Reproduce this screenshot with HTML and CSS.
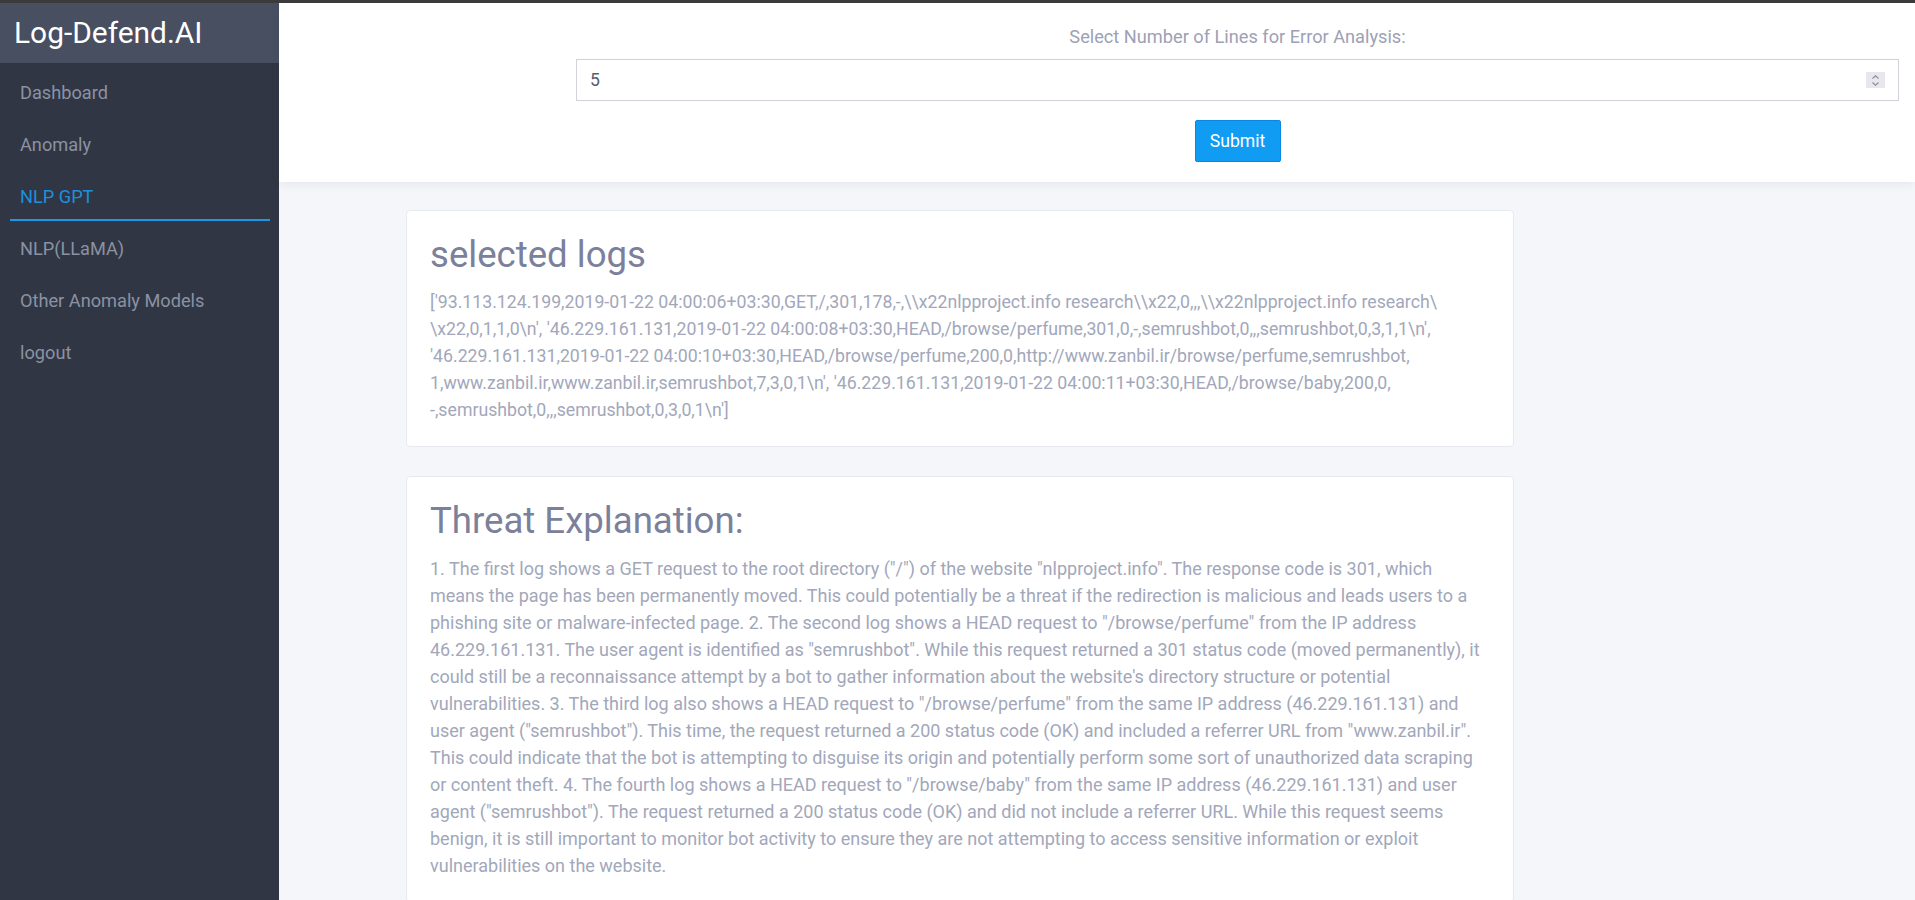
FILE: index.html
```html
<!DOCTYPE html>
<html lang="en">
<head>
<meta charset="utf-8">
<title>Log-Defend.AI</title>
<link rel="stylesheet" href="styles.css">
</head>
<body>
<div class="app">
  <aside class="sidebar">
    <div class="brand">Log-Defend.AI</div>
    <nav class="nav">
      <a class="nav-item" href="#">Dashboard</a>
      <a class="nav-item" href="#">Anomaly</a>
      <a class="nav-item active" href="#">NLP GPT</a>
      <a class="nav-item" href="#">NLP(LLaMA)</a>
      <a class="nav-item" href="#">Other Anomaly Models</a>
      <a class="nav-item" href="#">logout</a>
    </nav>
  </aside>
  <main class="main">
    <header class="topbar">
      <form class="line-form">
        <label class="form-label" for="lines">Select Number of Lines for Error Analysis:</label>
        <div class="num-field">
          <input id="lines" class="num-input" type="text" value="5">
          <span class="spinner">
            <svg width="9" height="13" viewBox="0 0 9 13"><path d="M1.5 4.5 L4.5 1.8 L7.5 4.5" fill="none" stroke="#8a8f9c" stroke-width="1.1"/><path d="M1.5 8.5 L4.5 11.2 L7.5 8.5" fill="none" stroke="#8a8f9c" stroke-width="1.1"/></svg>
          </span>
        </div>
        <button class="btn-submit" type="button">Submit</button>
      </form>
    </header>
    <section class="content">
      <div class="card">
        <h2 class="card-title">selected logs</h2>
        <p class="card-text logs">['93.113.124.199,2019-01-22 04:00:06+03:30,GET,/,301,178,-,\\x22nlpproject.info research\\x22,0,,,\\x22nlpproject.info research\<br>\x22,0,1,1,0\n', '46.229.161.131,2019-01-22 04:00:08+03:30,HEAD,/browse/perfume,301,0,-,semrushbot,0,,,semrushbot,0,3,1,1\n',<br>'46.229.161.131,2019-01-22 04:00:10+03:30,HEAD,/browse/perfume,200,0,http://www.zanbil.ir/browse/perfume,semrushbot,<br>1,www.zanbil.ir,www.zanbil.ir,semrushbot,7,3,0,1\n', '46.229.161.131,2019-01-22 04:00:11+03:30,HEAD,/browse/baby,200,0,<br>-,semrushbot,0,,,semrushbot,0,3,0,1\n']</p>
      </div>
      <div class="card">
        <h2 class="card-title">Threat Explanation:</h2>
        <p class="card-text explain">1. The first log shows a GET request to the root directory ("/") of the website "nlpproject.info". The response code is 301, which<br>means the page has been permanently moved. This could potentially be a threat if the redirection is malicious and leads users to a<br>phishing site or malware-infected page. 2. The second log shows a HEAD request to "/browse/perfume" from the IP address<br>46.229.161.131. The user agent is identified as "semrushbot". While this request returned a 301 status code (moved permanently), it<br>could still be a reconnaissance attempt by a bot to gather information about the website's directory structure or potential<br>vulnerabilities. 3. The third log also shows a HEAD request to "/browse/perfume" from the same IP address (46.229.161.131) and<br>user agent ("semrushbot"). This time, the request returned a 200 status code (OK) and included a referrer URL from "www.zanbil.ir".<br>This could indicate that the bot is attempting to disguise its origin and potentially perform some sort of unauthorized data scraping<br>or content theft. 4. The fourth log shows a HEAD request to "/browse/baby" from the same IP address (46.229.161.131) and user<br>agent ("semrushbot"). The request returned a 200 status code (OK) and did not include a referrer URL. While this request seems<br>benign, it is still important to monitor bot activity to ensure they are not attempting to access sensitive information or exploit<br>vulnerabilities on the website.</p>
      </div>
    </section>
  </main>
</div>
</body>
</html>
```

FILE: styles.css
```css
* { box-sizing: border-box; }

html, body {
  margin: 0;
  padding: 0;
  height: 100%;
  overflow: hidden;
}

body {
  font-family: Roboto, "Liberation Sans", sans-serif;
  background: #f5f6fa;
  border-top: 3px solid #3b3b3d;
}

.app {
  display: flex;
  min-height: 897px;
}

/* Sidebar */
.sidebar {
  width: 279px;
  flex: 0 0 279px;
  background: #313644;
  min-height: 897px;
}

.brand {
  height: 60px;
  background: #474f61;
  color: #ffffff;
  font-size: 29.9px;
  line-height: 60px;
  padding-left: 14px;
  white-space: nowrap;
}

.nav {
  display: flex;
  flex-direction: column;
  padding-top: 6px;
}

.nav-item {
  display: flex;
  align-items: center;
  height: 48px;
  margin: 0 9px 4px 10px;
  padding-left: 10px;
  border-bottom: 2px solid transparent;
  color: #8a92a3;
  font-size: 18.2px;
  text-decoration: none;
  white-space: nowrap;
}

.nav-item.active {
  color: #1e8fdb;
  border-bottom-color: #1a98e8;
}

/* Main */
.main {
  flex: 1;
  display: flex;
  flex-direction: column;
  background: #f5f6fa;
}

.topbar {
  background: #ffffff;
  height: 179px;
  padding: 22px 16px 0 297px;
  box-shadow: 0 3px 8px rgba(40, 50, 80, 0.07);
  position: relative;
  z-index: 1;
}

.line-form {
  display: flex;
  flex-direction: column;
  align-items: center;
}

.form-label {
  font-size: 18.2px;
  line-height: 24px;
  color: #9da1b5;
  margin-bottom: 10px;
}

.num-field {
  width: 100%;
  height: 42px;
  display: flex;
  align-items: center;
  border: 1px solid #d2d3da;
  background: #fff;
}

.num-input {
  flex: 1;
  border: none;
  outline: none;
  height: 100%;
  padding: 0 0 0 13px;
  font-family: Roboto, "Liberation Sans", sans-serif;
  font-size: 17.6px;
  color: #555e6c;
  background: transparent;
}

.spinner {
  width: 19px;
  height: 16px;
  margin-right: 13px;
  background: #e7e7ed;
  display: flex;
  align-items: center;
  justify-content: center;
}

.btn-submit {
  margin-top: 19px;
  width: 86px;
  height: 42px;
  background: #109cf2;
  border: 1px solid #0a86e2;
  border-radius: 2px;
  color: #ffffff;
  font-family: Roboto, "Liberation Sans", sans-serif;
  font-size: 17.6px;
  padding: 0;
}

/* Content */
.content {
  padding: 28px 0 0 127px;
  display: flex;
  flex-direction: column;
  gap: 29px;
}

.card {
  width: 1108px;
  background: #ffffff;
  border: 1px solid #e7e9f0;
  border-radius: 4px;
  padding: 22px 23px;
}

.card-title {
  margin: 0 0 13px;
  font-size: 36.6px;
  line-height: 43px;
  font-weight: 400;
  color: #7b809b;
}

.card-text {
  margin: 0;
  line-height: 27px;
  color: #a2a7ba;
  white-space: nowrap;
}

.card-text.logs {
  font-size: 17.7px;
}

.card-text.explain {
  font-size: 18px;
}
```
